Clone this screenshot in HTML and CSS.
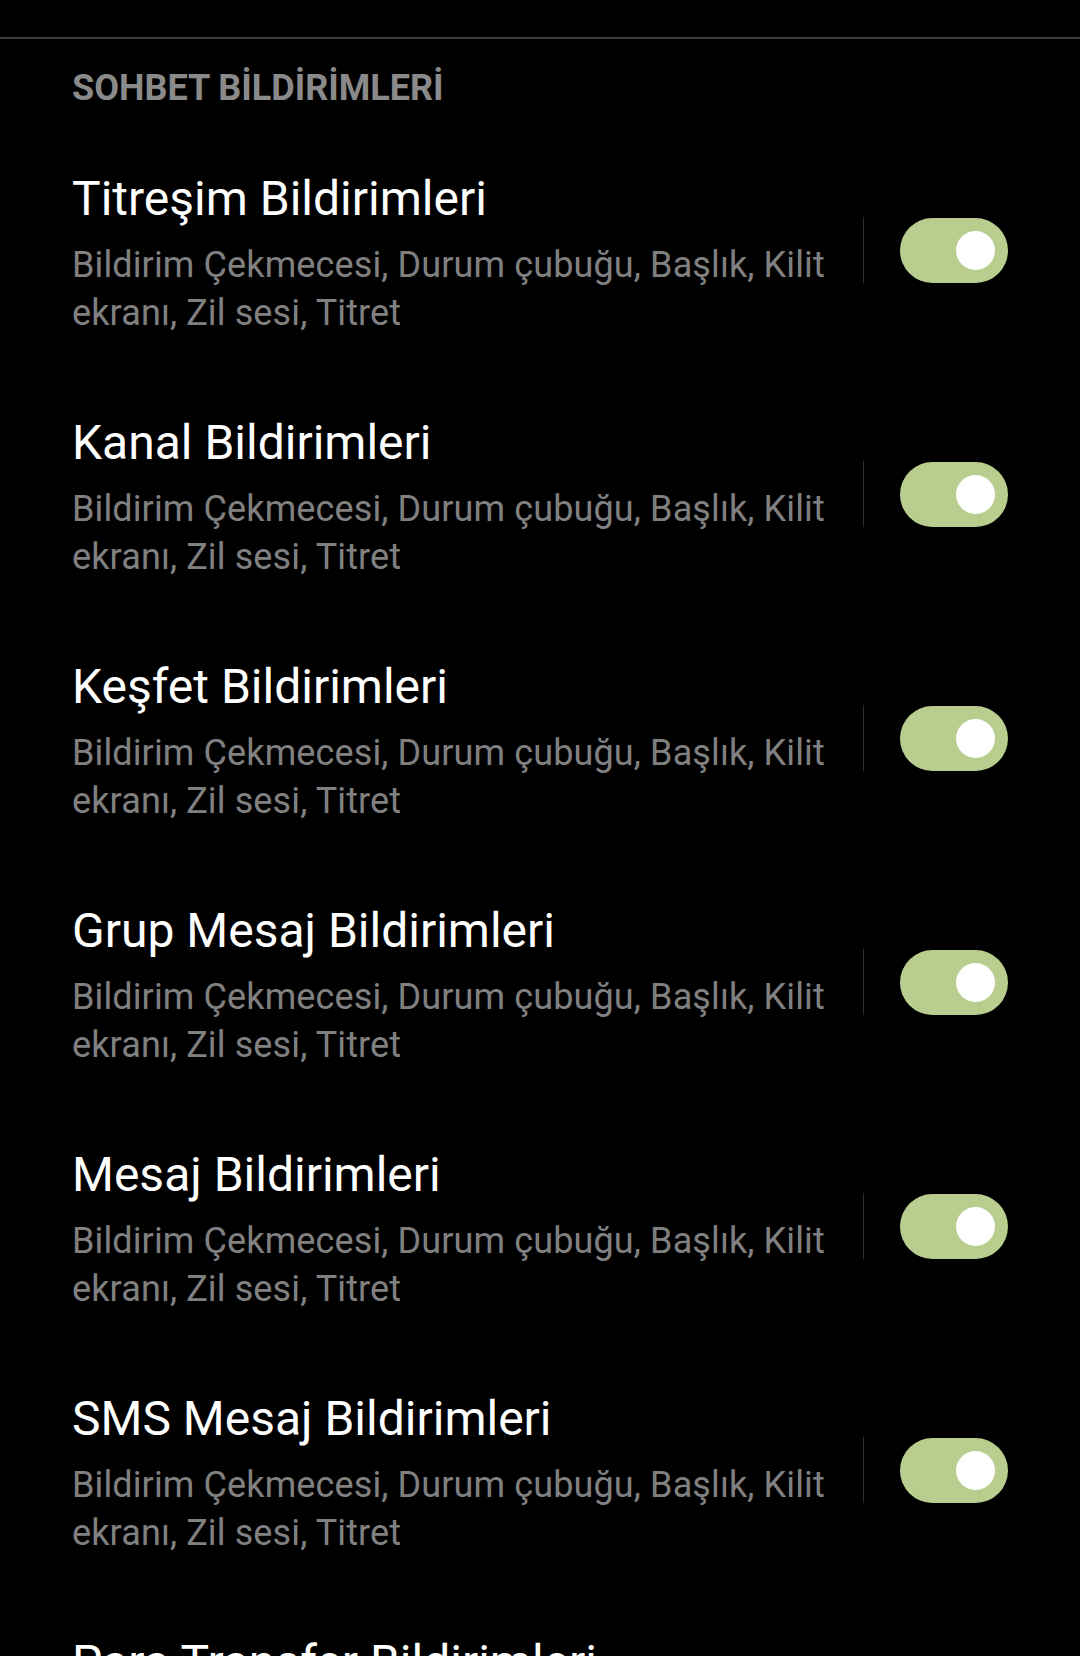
FILE: index.html
```html
<!DOCTYPE html>
<html lang="tr">
<head>
<meta charset="utf-8">
<link rel="stylesheet" href="styles.css">
</head>
<body>
<div class="topbar"></div>
<div class="section-header">SOHBET BİLDİRİMLERİ</div>
<div class="list">
  <div class="row">
    <div class="text">
      <div class="title">Titreşim Bildirimleri</div>
      <div class="summary">Bildirim Çekmecesi, Durum çubuğu, Başlık, Kilit ekranı, Zil sesi, Titret</div>
    </div>
    <div class="divider"></div>
    <div class="switch on"><span class="knob"></span></div>
  </div>
  <div class="row">
    <div class="text">
      <div class="title">Kanal Bildirimleri</div>
      <div class="summary">Bildirim Çekmecesi, Durum çubuğu, Başlık, Kilit ekranı, Zil sesi, Titret</div>
    </div>
    <div class="divider"></div>
    <div class="switch on"><span class="knob"></span></div>
  </div>
  <div class="row">
    <div class="text">
      <div class="title">Keşfet Bildirimleri</div>
      <div class="summary">Bildirim Çekmecesi, Durum çubuğu, Başlık, Kilit ekranı, Zil sesi, Titret</div>
    </div>
    <div class="divider"></div>
    <div class="switch on"><span class="knob"></span></div>
  </div>
  <div class="row">
    <div class="text">
      <div class="title">Grup Mesaj Bildirimleri</div>
      <div class="summary">Bildirim Çekmecesi, Durum çubuğu, Başlık, Kilit ekranı, Zil sesi, Titret</div>
    </div>
    <div class="divider"></div>
    <div class="switch on"><span class="knob"></span></div>
  </div>
  <div class="row">
    <div class="text">
      <div class="title">Mesaj Bildirimleri</div>
      <div class="summary">Bildirim Çekmecesi, Durum çubuğu, Başlık, Kilit ekranı, Zil sesi, Titret</div>
    </div>
    <div class="divider"></div>
    <div class="switch on"><span class="knob"></span></div>
  </div>
  <div class="row">
    <div class="text">
      <div class="title">SMS Mesaj Bildirimleri</div>
      <div class="summary">Bildirim Çekmecesi, Durum çubuğu, Başlık, Kilit ekranı, Zil sesi, Titret</div>
    </div>
    <div class="divider"></div>
    <div class="switch on"><span class="knob"></span></div>
  </div>
  <div class="row">
    <div class="text">
      <div class="title">Para Transfer Bildirimleri</div>
      <div class="summary">Bildirim Çekmecesi, Durum çubuğu, Başlık, Kilit ekranı, Zil sesi, Titret</div>
    </div>
    <div class="divider"></div>
    <div class="switch on"><span class="knob"></span></div>
  </div>
</div>
</body>
</html>
```
FILE: styles.css
```css
html, body {
  margin: 0;
  padding: 0;
  background: #000;
}
body {
  font-family: Roboto, "Noto Sans", "Liberation Sans", sans-serif;
  width: 1080px;
  height: 1656px;
  overflow: hidden;
}
.topbar {
  height: 37px;
  border-bottom: 2px solid #3c3c3c;
}
.section-header {
  padding: 25px 72px 16px 72px;
  font-size: 36px;
  line-height: 48px;
  font-weight: 700;
  color: #8a8a8a;
}
.row {
  display: flex;
  align-items: center;
  padding: 0 72px 0 72px;
}
.text {
  flex: 1;
  padding: 43px 0 35px 0;
}
.title {
  font-size: 48px;
  line-height: 56px;
  color: #ffffff;
  margin-bottom: 14px;
}
.summary {
  font-size: 36px;
  line-height: 48px;
  letter-spacing: 0.12px;
  color: #808080;
}
.divider {
  width: 1px;
  height: 66px;
  background: #2e2e2e;
  margin: 0 36px 0 24px;
}
.switch {
  position: relative;
  width: 108px;
  height: 65px;
  border-radius: 33px;
  background: #b8cd8e;
  flex-shrink: 0;
}
.knob {
  position: absolute;
  right: 13px;
  top: 13px;
  width: 39px;
  height: 39px;
  border-radius: 50%;
  background: #ffffff;
}
```
